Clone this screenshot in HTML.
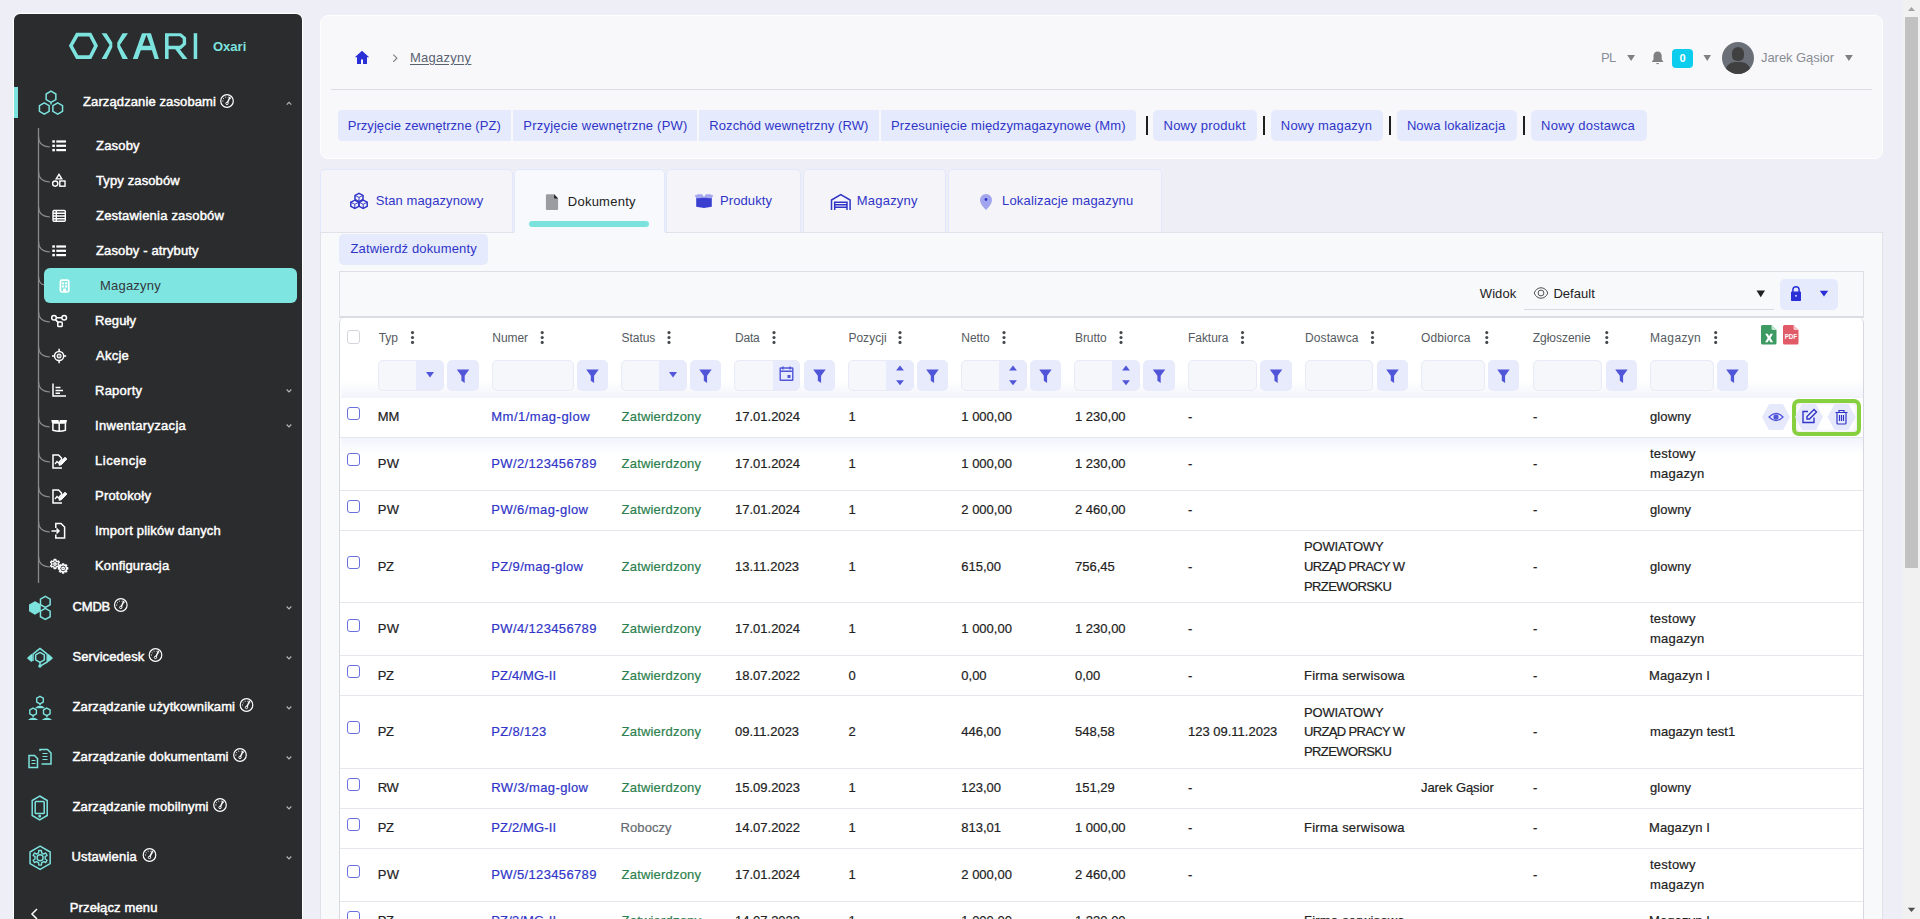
<!DOCTYPE html><html><head><meta charset="utf-8"><title>Magazyny</title><style>
*{box-sizing:border-box;margin:0;padding:0}
html,body{width:1920px;height:919px;overflow:hidden;background:#eeeef7;font-family:"Liberation Sans",sans-serif;}
.a{position:absolute}
.t{position:absolute;white-space:nowrap;line-height:1}
.si{position:absolute;color:#fff;font-weight:400;-webkit-text-stroke:0.45px #fff;white-space:nowrap;line-height:1}
#ov{position:absolute;left:0;top:0;width:1920px;height:919px}
</style></head><body>
<div class="a" style="left:14px;top:14px;width:288px;height:960px;background:#2b2c2e;border-radius:6px;box-shadow:0 0 0 1px #fff"></div>
<div class="a" style="left:44px;top:268px;width:253px;height:35px;background:#7fe5e1;border-radius:6px"></div>
<div class="a" style="left:14px;top:87px;width:4px;height:31px;background:#7de3de"></div>
<div class="t" style="left:213.00px;top:40.00px;font-size:13px;font-weight:700;color:#7de3de">Oxari</div>
<div class="si" style="left:83.00px;top:94.80px;font-size:13px;;letter-spacing:0.111px">Zarządzanie zasobami</div>
<div class="si" style="left:96.00px;top:138.50px;font-size:13px;;letter-spacing:0.194px">Zasoby</div>
<div class="si" style="left:96.00px;top:173.50px;font-size:13px;;letter-spacing:0.120px">Typy zasobów</div>
<div class="si" style="left:96.00px;top:208.50px;font-size:13px;;letter-spacing:0.200px">Zestawienia zasobów</div>
<div class="si" style="left:96.00px;top:243.50px;font-size:13px;;letter-spacing:0.136px">Zasoby - atrybuty</div>
<div class="t" style="left:100.00px;top:279.00px;font-size:13px;color:#33383d;letter-spacing:0.207px">Magazyny</div>
<div class="si" style="left:95.00px;top:313.50px;font-size:13px;;letter-spacing:0.107px">Reguły</div>
<div class="si" style="left:96.00px;top:348.50px;font-size:13px;;letter-spacing:0.260px">Akcje</div>
<div class="si" style="left:95.00px;top:383.50px;font-size:13px;;letter-spacing:0.247px">Raporty</div>
<div class="si" style="left:95.00px;top:418.50px;font-size:13px;;letter-spacing:0.317px">Inwentaryzacja</div>
<div class="si" style="left:95.00px;top:453.50px;font-size:13px;;letter-spacing:0.519px">Licencje</div>
<div class="si" style="left:95.00px;top:488.50px;font-size:13px;;letter-spacing:0.214px">Protokoły</div>
<div class="si" style="left:95.00px;top:523.50px;font-size:13px;;letter-spacing:0.191px">Import plików danych</div>
<div class="si" style="left:95.00px;top:558.50px;font-size:13px;;letter-spacing:0.169px">Konfiguracja</div>
<div class="si" style="left:72.50px;top:600.00px;font-size:13px;;letter-spacing:-0.168px">CMDB</div>
<div class="si" style="left:72.50px;top:650.00px;font-size:13px;;letter-spacing:0.099px">Servicedesk</div>
<div class="si" style="left:72.50px;top:700.00px;font-size:13px;;letter-spacing:0.117px">Zarządzanie użytkownikami</div>
<div class="si" style="left:72.50px;top:750.00px;font-size:13px;;letter-spacing:0.127px">Zarządzanie dokumentami</div>
<div class="si" style="left:72.50px;top:800.00px;font-size:13px;;letter-spacing:0.116px">Zarządzanie mobilnymi</div>
<div class="si" style="left:71.50px;top:850.00px;font-size:13px;;letter-spacing:0.183px">Ustawienia</div>
<div class="si" style="left:69.80px;top:901.00px;font-size:13px;;letter-spacing:0.138px">Przełącz menu</div>
<div class="a" style="left:320px;top:15px;width:1563px;height:144px;background:#f8f8fb;border-radius:8px;border:1px solid #fff"></div>
<div class="a" style="left:331px;top:89px;width:1541px;height:1px;background:#dcdde3"></div>
<div class="t" style="left:410.00px;top:50.80px;font-size:13px;color:#5a6270;text-decoration:underline;text-underline-offset:2px;letter-spacing:0.264px">Magazyny</div>
<div class="t" style="left:1601.00px;top:51.00px;font-size:13px;color:#8a8f99;letter-spacing:-0.671px">PL</div>
<div class="t" style="left:1761.00px;top:51.00px;font-size:13px;color:#888c94;letter-spacing:-0.060px">Jarek Gąsior</div>
<div class="a" style="left:1672px;top:49px;width:21px;height:19px;background:#0dcdef;border-radius:4px;color:#fff;font-size:11px;font-weight:700;text-align:center;line-height:19px">0</div>
<div class="a" style="left:1722px;top:42px;width:32px;height:32px;border-radius:50%;background:#6b7078;overflow:hidden"><div class="a" style="left:10px;top:5px;width:12px;height:14px;border-radius:6px 6px 5px 5px;background:#404040"></div><div class="a" style="left:3px;top:20px;width:26px;height:14px;border-radius:10px 10px 0 0;background:#404040"></div></div>
<div class="a" style="left:338.0px;top:110px;width:173.0px;height:31px;background:#e5eafd;border-radius:4px 0 0 4px"></div>
<div class="t" style="left:347.70px;top:119.40px;font-size:13px;color:#3035c8;letter-spacing:0.059px">Przyjęcie zewnętrzne (PZ)</div>
<div class="a" style="left:513.0px;top:110px;width:184.0px;height:31px;background:#e5eafd;border-radius:0"></div>
<div class="t" style="left:523.30px;top:119.40px;font-size:13px;color:#3035c8;letter-spacing:0.213px">Przyjęcie wewnętrzne (PW)</div>
<div class="a" style="left:699.0px;top:110px;width:180.0px;height:31px;background:#e5eafd;border-radius:0"></div>
<div class="t" style="left:709.30px;top:119.40px;font-size:13px;color:#3035c8;letter-spacing:0.081px">Rozchód wewnętrzny (RW)</div>
<div class="a" style="left:881.0px;top:110px;width:254.5px;height:31px;background:#e5eafd;border-radius:0 4px 4px 0"></div>
<div class="t" style="left:891.00px;top:119.40px;font-size:13px;color:#3035c8;letter-spacing:0.148px">Przesunięcie międzymagazynowe (Mm)</div>
<div class="a" style="left:1153.0px;top:110px;width:104.0px;height:31px;background:#e5eafd;border-radius:5px"></div>
<div class="t" style="left:1163.50px;top:119.40px;font-size:13px;color:#3035c8;letter-spacing:0.239px">Nowy produkt</div>
<div class="a" style="left:1270.8px;top:110px;width:111.8px;height:31px;background:#e5eafd;border-radius:5px"></div>
<div class="t" style="left:1280.80px;top:119.40px;font-size:13px;color:#3035c8;letter-spacing:0.215px">Nowy magazyn</div>
<div class="a" style="left:1396.9px;top:110px;width:120.1px;height:31px;background:#e5eafd;border-radius:5px"></div>
<div class="t" style="left:1406.90px;top:119.40px;font-size:13px;color:#3035c8;letter-spacing:0.094px">Nowa lokalizacja</div>
<div class="a" style="left:1530.8px;top:110px;width:115.9px;height:31px;background:#e5eafd;border-radius:5px"></div>
<div class="t" style="left:1541.10px;top:119.40px;font-size:13px;color:#3035c8;letter-spacing:0.224px">Nowy dostawca</div>
<div class="a" style="left:1146px;top:116px;width:2px;height:19px;background:#1e1e1e"></div>
<div class="a" style="left:1263px;top:116px;width:2px;height:19px;background:#1e1e1e"></div>
<div class="a" style="left:1389px;top:116px;width:2px;height:19px;background:#1e1e1e"></div>
<div class="a" style="left:1523px;top:116px;width:2px;height:19px;background:#1e1e1e"></div>
<div class="a" style="left:320.0px;top:169px;width:192.5px;height:64px;background:#f4f4f9;border-radius:5px 5px 0 0;border:1px solid #e2e8fc;border-bottom:none"></div>
<div class="t" style="left:375.80px;top:193.90px;font-size:13px;color:#3035c8;letter-spacing:0.091px">Stan magazynowy</div>
<div class="a" style="left:513.5px;top:169px;width:151.0px;height:64px;background:#f8f9fc;border-radius:5px 5px 0 0;border:1px solid #e2e8fc;border-bottom:none"></div>
<div class="t" style="left:567.80px;top:194.80px;font-size:13px;color:#222;letter-spacing:0.244px">Dokumenty</div>
<div class="a" style="left:666.0px;top:169px;width:135.0px;height:64px;background:#f4f4f9;border-radius:5px 5px 0 0;border:1px solid #e2e8fc;border-bottom:none"></div>
<div class="t" style="left:720.00px;top:193.90px;font-size:13px;color:#3035c8;letter-spacing:0.100px">Produkty</div>
<div class="a" style="left:803.0px;top:169px;width:143.0px;height:64px;background:#f4f4f9;border-radius:5px 5px 0 0;border:1px solid #e2e8fc;border-bottom:none"></div>
<div class="t" style="left:856.80px;top:193.90px;font-size:13px;color:#3035c8;letter-spacing:0.207px">Magazyny</div>
<div class="a" style="left:948.0px;top:169px;width:214.0px;height:64px;background:#f4f4f9;border-radius:5px 5px 0 0;border:1px solid #e2e8fc;border-bottom:none"></div>
<div class="t" style="left:1002.00px;top:193.90px;font-size:13px;color:#3035c8;letter-spacing:0.175px">Lokalizacje magazynu</div>
<div class="a" style="left:529px;top:221px;width:120px;height:6px;border-radius:3px;background:#7ce3dc"></div>
<div class="a" style="left:320px;top:232px;width:1563px;height:720px;background:#f8f9fb;border:1px solid #e1e2e9"></div>
<div class="a" style="left:513.5px;top:232px;width:151px;height:2px;background:#f8f9fc"></div>
<div class="a" style="left:339px;top:233.5px;width:149px;height:31.5px;background:#e5eafd;border-radius:5px"></div>
<div class="t" style="left:350.50px;top:242.20px;font-size:13px;color:#3035c8;letter-spacing:0.147px">Zatwierdź dokumenty</div>
<div class="a" style="left:339px;top:271px;width:1525px;height:47px;background:#f8f9fb;border:1px solid #dfe0e6;border-bottom:2px solid #dcdde3"></div>
<div class="t" style="left:1479.80px;top:286.80px;font-size:13px;color:#222;letter-spacing:0.070px">Widok</div>
<div class="t" style="left:1553.40px;top:286.80px;font-size:13px;color:#222;letter-spacing:0.037px">Default</div>
<div class="a" style="left:1524px;top:309px;width:250px;height:1px;background:#d9dadf"></div>
<div class="a" style="left:1780px;top:279px;width:58px;height:31px;background:#e5eafd;border-radius:5px"></div>
<div class="a" style="left:339px;top:318px;width:1525px;height:640px;background:#fff;border-left:1px solid #d8d9e0;border-right:1px solid #d8d9e0;border-radius:5px 5px 0 0"></div>
<div class="a" style="left:340.5px;top:380px;width:1522.5px;height:18px;background:linear-gradient(#fff,#f3f4fb)"></div>
<div class="t" style="left:378.70px;top:331.84px;font-size:12px;color:#555a60;letter-spacing:-0.084px">Typ</div>
<div class="t" style="left:492.30px;top:331.84px;font-size:12px;color:#555a60;letter-spacing:-0.077px">Numer</div>
<div class="t" style="left:621.60px;top:331.84px;font-size:12px;color:#555a60;letter-spacing:-0.064px">Status</div>
<div class="t" style="left:735.00px;top:331.84px;font-size:12px;color:#555a60;letter-spacing:-0.225px">Data</div>
<div class="t" style="left:848.40px;top:331.84px;font-size:12px;color:#555a60;letter-spacing:0.026px">Pozycji</div>
<div class="t" style="left:961.30px;top:331.84px;font-size:12px;color:#555a60;letter-spacing:-0.064px">Netto</div>
<div class="t" style="left:1075.00px;top:331.84px;font-size:12px;color:#555a60;letter-spacing:-0.068px">Brutto</div>
<div class="t" style="left:1188.00px;top:331.84px;font-size:12px;color:#555a60;letter-spacing:-0.043px">Faktura</div>
<div class="t" style="left:1305.00px;top:331.84px;font-size:12px;color:#555a60;letter-spacing:0.105px">Dostawca</div>
<div class="t" style="left:1421.00px;top:331.84px;font-size:12px;color:#555a60;letter-spacing:0.112px">Odbiorca</div>
<div class="t" style="left:1532.70px;top:331.84px;font-size:12px;color:#555a60;letter-spacing:-0.017px">Zgłoszenie</div>
<div class="t" style="left:1650.00px;top:331.84px;font-size:12px;color:#555a60;letter-spacing:0.347px">Magazyn</div>
<div class="a" style="left:347px;top:330px;width:13px;height:14px;border:1px solid #d4d5dc;border-radius:3px;background:#fff"></div>
<div class="a" style="left:378px;top:360px;width:66px;height:31px;background:#f6f7fb;border:1px solid #e8ebf7;border-radius:5px;overflow:hidden"><div class="a" style="left:37px;top:0;width:28px;height:29px;background:#e8ebfb"></div></div>
<div class="a" style="left:447px;top:360px;width:32px;height:31px;background:#e8ebfb;border-radius:5px"></div>
<div class="a" style="left:492px;top:360px;width:82px;height:31px;background:#f6f7fb;border:1px solid #e8ebf7;border-radius:5px;overflow:hidden"></div>
<div class="a" style="left:577px;top:360px;width:31px;height:31px;background:#e8ebfb;border-radius:5px"></div>
<div class="a" style="left:621px;top:360px;width:66px;height:31px;background:#f6f7fb;border:1px solid #e8ebf7;border-radius:5px;overflow:hidden"><div class="a" style="left:37px;top:0;width:28px;height:29px;background:#e8ebfb"></div></div>
<div class="a" style="left:690px;top:360px;width:31px;height:31px;background:#e8ebfb;border-radius:5px"></div>
<div class="a" style="left:734px;top:360px;width:66px;height:31px;background:#f6f7fb;border:1px solid #e8ebf7;border-radius:5px;overflow:hidden"><div class="a" style="left:38px;top:0;width:27px;height:29px;background:#e8ebfb"></div></div>
<div class="a" style="left:804px;top:360px;width:31px;height:31px;background:#e8ebfb;border-radius:5px"></div>
<div class="a" style="left:848px;top:360px;width:66px;height:31px;background:#f6f7fb;border:1px solid #e8ebf7;border-radius:5px;overflow:hidden"><div class="a" style="left:37px;top:0;width:28px;height:29px;background:#e8ebfb"></div></div>
<div class="a" style="left:917px;top:360px;width:31px;height:31px;background:#e8ebfb;border-radius:5px"></div>
<div class="a" style="left:961px;top:360px;width:66px;height:31px;background:#f6f7fb;border:1px solid #e8ebf7;border-radius:5px;overflow:hidden"><div class="a" style="left:37px;top:0;width:28px;height:29px;background:#e8ebfb"></div></div>
<div class="a" style="left:1030px;top:360px;width:31px;height:31px;background:#e8ebfb;border-radius:5px"></div>
<div class="a" style="left:1074px;top:360px;width:66px;height:31px;background:#f6f7fb;border:1px solid #e8ebf7;border-radius:5px;overflow:hidden"><div class="a" style="left:37px;top:0;width:28px;height:29px;background:#e8ebfb"></div></div>
<div class="a" style="left:1143px;top:360px;width:32px;height:31px;background:#e8ebfb;border-radius:5px"></div>
<div class="a" style="left:1188px;top:360px;width:69px;height:31px;background:#f6f7fb;border:1px solid #e8ebf7;border-radius:5px;overflow:hidden"></div>
<div class="a" style="left:1260px;top:360px;width:32px;height:31px;background:#e8ebfb;border-radius:5px"></div>
<div class="a" style="left:1305px;top:360px;width:68px;height:31px;background:#f6f7fb;border:1px solid #e8ebf7;border-radius:5px;overflow:hidden"></div>
<div class="a" style="left:1377px;top:360px;width:31px;height:31px;background:#e8ebfb;border-radius:5px"></div>
<div class="a" style="left:1421px;top:360px;width:64px;height:31px;background:#f6f7fb;border:1px solid #e8ebf7;border-radius:5px;overflow:hidden"></div>
<div class="a" style="left:1488px;top:360px;width:31px;height:31px;background:#e8ebfb;border-radius:5px"></div>
<div class="a" style="left:1533px;top:360px;width:69px;height:31px;background:#f6f7fb;border:1px solid #e8ebf7;border-radius:5px;overflow:hidden"></div>
<div class="a" style="left:1606px;top:360px;width:31px;height:31px;background:#e8ebfb;border-radius:5px"></div>
<div class="a" style="left:1650px;top:360px;width:64px;height:31px;background:#f6f7fb;border:1px solid #e8ebf7;border-radius:5px;overflow:hidden"></div>
<div class="a" style="left:1717px;top:360px;width:31px;height:31px;background:#e8ebfb;border-radius:5px"></div>
<div class="a" style="left:340.5px;top:398px;width:1522.5px;height:39px;background:#fff"></div>
<div class="a" style="left:340px;top:437px;width:1523px;height:1px;background:#e6e7ec"></div>
<div class="a" style="left:347px;top:407.2px;width:13px;height:13px;border:1.5px solid #6a6fe0;border-radius:3px;background:#fff"></div>
<div class="t" style="left:377.70px;top:409.60px;font-size:13px;color:#222;-webkit-text-stroke:0.2px #222">MM</div>
<div class="t" style="left:491.30px;top:409.60px;font-size:13px;color:#3035c8;-webkit-text-stroke:0.2px #3035c8;letter-spacing:0.485px">Mm/1/mag-glow</div>
<div class="t" style="left:621.60px;top:409.60px;font-size:13px;color:#2d7f4e;-webkit-text-stroke:0.2px #2d7f4e;letter-spacing:0.190px">Zatwierdzony</div>
<div class="t" style="left:735.00px;top:409.60px;font-size:13px;color:#222;-webkit-text-stroke:0.2px #222">17.01.2024</div>
<div class="t" style="left:848.40px;top:409.60px;font-size:13px;color:#222;-webkit-text-stroke:0.2px #222">1</div>
<div class="t" style="left:961.30px;top:409.60px;font-size:13px;color:#222;-webkit-text-stroke:0.2px #222">1 000,00</div>
<div class="t" style="left:1075.00px;top:409.60px;font-size:13px;color:#222;-webkit-text-stroke:0.2px #222">1 230,00</div>
<div class="t" style="left:1188.00px;top:409.60px;font-size:13px;color:#222;-webkit-text-stroke:0.2px #222">-</div>
<div class="t" style="left:1533.00px;top:409.60px;font-size:13px;color:#222;-webkit-text-stroke:0.2px #222">-</div>
<div class="t" style="left:1650.00px;top:409.60px;font-size:13px;color:#222;-webkit-text-stroke:0.2px #222;letter-spacing:0.127px">glowny</div>
<div class="a" style="left:340.5px;top:438px;width:1522.5px;height:16px;background:linear-gradient(#f2f4fc,#fff)"></div>
<div class="a" style="left:340px;top:490px;width:1523px;height:1px;background:#e6e7ec"></div>
<div class="a" style="left:347px;top:453.3px;width:13px;height:13px;border:1.5px solid #6a6fe0;border-radius:3px;background:#fff"></div>
<div class="t" style="left:377.70px;top:456.75px;font-size:13px;color:#222;-webkit-text-stroke:0.2px #222;letter-spacing:0.329px">PW</div>
<div class="t" style="left:491.30px;top:456.75px;font-size:13px;color:#3035c8;-webkit-text-stroke:0.2px #3035c8;letter-spacing:0.359px">PW/2/123456789</div>
<div class="t" style="left:621.60px;top:456.75px;font-size:13px;color:#2d7f4e;-webkit-text-stroke:0.2px #2d7f4e;letter-spacing:0.190px">Zatwierdzony</div>
<div class="t" style="left:735.00px;top:456.75px;font-size:13px;color:#222;-webkit-text-stroke:0.2px #222">17.01.2024</div>
<div class="t" style="left:848.40px;top:456.75px;font-size:13px;color:#222;-webkit-text-stroke:0.2px #222">1</div>
<div class="t" style="left:961.30px;top:456.75px;font-size:13px;color:#222;-webkit-text-stroke:0.2px #222">1 000,00</div>
<div class="t" style="left:1075.00px;top:456.75px;font-size:13px;color:#222;-webkit-text-stroke:0.2px #222">1 230,00</div>
<div class="t" style="left:1188.00px;top:456.75px;font-size:13px;color:#222;-webkit-text-stroke:0.2px #222">-</div>
<div class="t" style="left:1533.00px;top:456.75px;font-size:13px;color:#222;-webkit-text-stroke:0.2px #222">-</div>
<div class="t" style="left:1650.00px;top:446.85px;font-size:13px;color:#222;-webkit-text-stroke:0.2px #222;letter-spacing:0.238px">testowy</div>
<div class="t" style="left:1650.00px;top:466.65px;font-size:13px;color:#222;-webkit-text-stroke:0.2px #222;letter-spacing:0.230px">magazyn</div>
<div class="a" style="left:340px;top:530px;width:1523px;height:1px;background:#e6e7ec"></div>
<div class="a" style="left:347px;top:500.1px;width:13px;height:13px;border:1.5px solid #6a6fe0;border-radius:3px;background:#fff"></div>
<div class="t" style="left:377.70px;top:502.50px;font-size:13px;color:#222;-webkit-text-stroke:0.2px #222;letter-spacing:0.329px">PW</div>
<div class="t" style="left:491.30px;top:502.50px;font-size:13px;color:#3035c8;-webkit-text-stroke:0.2px #3035c8;letter-spacing:0.412px">PW/6/mag-glow</div>
<div class="t" style="left:621.60px;top:502.50px;font-size:13px;color:#2d7f4e;-webkit-text-stroke:0.2px #2d7f4e;letter-spacing:0.190px">Zatwierdzony</div>
<div class="t" style="left:735.00px;top:502.50px;font-size:13px;color:#222;-webkit-text-stroke:0.2px #222">17.01.2024</div>
<div class="t" style="left:848.40px;top:502.50px;font-size:13px;color:#222;-webkit-text-stroke:0.2px #222">1</div>
<div class="t" style="left:961.30px;top:502.50px;font-size:13px;color:#222;-webkit-text-stroke:0.2px #222">2 000,00</div>
<div class="t" style="left:1075.00px;top:502.50px;font-size:13px;color:#222;-webkit-text-stroke:0.2px #222">2 460,00</div>
<div class="t" style="left:1188.00px;top:502.50px;font-size:13px;color:#222;-webkit-text-stroke:0.2px #222">-</div>
<div class="t" style="left:1533.00px;top:502.50px;font-size:13px;color:#222;-webkit-text-stroke:0.2px #222">-</div>
<div class="t" style="left:1650.00px;top:502.50px;font-size:13px;color:#222;-webkit-text-stroke:0.2px #222;letter-spacing:0.127px">glowny</div>
<div class="a" style="left:340px;top:602px;width:1523px;height:1px;background:#e6e7ec"></div>
<div class="a" style="left:347px;top:556.2px;width:13px;height:13px;border:1.5px solid #6a6fe0;border-radius:3px;background:#fff"></div>
<div class="t" style="left:377.70px;top:559.55px;font-size:13px;color:#222;-webkit-text-stroke:0.2px #222;letter-spacing:-0.471px">PZ</div>
<div class="t" style="left:491.30px;top:559.55px;font-size:13px;color:#3035c8;-webkit-text-stroke:0.2px #3035c8;letter-spacing:0.347px">PZ/9/mag-glow</div>
<div class="t" style="left:621.60px;top:559.55px;font-size:13px;color:#2d7f4e;-webkit-text-stroke:0.2px #2d7f4e;letter-spacing:0.190px">Zatwierdzony</div>
<div class="t" style="left:735.00px;top:559.55px;font-size:13px;color:#222;-webkit-text-stroke:0.2px #222">13.11.2023</div>
<div class="t" style="left:848.40px;top:559.55px;font-size:13px;color:#222;-webkit-text-stroke:0.2px #222">1</div>
<div class="t" style="left:961.30px;top:559.55px;font-size:13px;color:#222;-webkit-text-stroke:0.2px #222">615,00</div>
<div class="t" style="left:1075.00px;top:559.55px;font-size:13px;color:#222;-webkit-text-stroke:0.2px #222">756,45</div>
<div class="t" style="left:1188.00px;top:559.55px;font-size:13px;color:#222;-webkit-text-stroke:0.2px #222">-</div>
<div class="t" style="left:1304.00px;top:540.25px;font-size:13px;color:#222;-webkit-text-stroke:0.2px #222;letter-spacing:-0.195px">POWIATOWY</div>
<div class="t" style="left:1304.00px;top:560.05px;font-size:13px;color:#222;-webkit-text-stroke:0.2px #222;letter-spacing:-0.641px">URZĄD PRACY W</div>
<div class="t" style="left:1304.00px;top:579.85px;font-size:13px;color:#222;-webkit-text-stroke:0.2px #222;letter-spacing:-0.598px">PRZEWORSKU</div>
<div class="t" style="left:1533.00px;top:559.55px;font-size:13px;color:#222;-webkit-text-stroke:0.2px #222">-</div>
<div class="t" style="left:1650.00px;top:559.55px;font-size:13px;color:#222;-webkit-text-stroke:0.2px #222;letter-spacing:0.127px">glowny</div>
<div class="a" style="left:340px;top:655px;width:1523px;height:1px;background:#e6e7ec"></div>
<div class="a" style="left:347px;top:618.5px;width:13px;height:13px;border:1.5px solid #6a6fe0;border-radius:3px;background:#fff"></div>
<div class="t" style="left:377.70px;top:621.90px;font-size:13px;color:#222;-webkit-text-stroke:0.2px #222;letter-spacing:0.329px">PW</div>
<div class="t" style="left:491.30px;top:621.90px;font-size:13px;color:#3035c8;-webkit-text-stroke:0.2px #3035c8;letter-spacing:0.359px">PW/4/123456789</div>
<div class="t" style="left:621.60px;top:621.90px;font-size:13px;color:#2d7f4e;-webkit-text-stroke:0.2px #2d7f4e;letter-spacing:0.190px">Zatwierdzony</div>
<div class="t" style="left:735.00px;top:621.90px;font-size:13px;color:#222;-webkit-text-stroke:0.2px #222">17.01.2024</div>
<div class="t" style="left:848.40px;top:621.90px;font-size:13px;color:#222;-webkit-text-stroke:0.2px #222">1</div>
<div class="t" style="left:961.30px;top:621.90px;font-size:13px;color:#222;-webkit-text-stroke:0.2px #222">1 000,00</div>
<div class="t" style="left:1075.00px;top:621.90px;font-size:13px;color:#222;-webkit-text-stroke:0.2px #222">1 230,00</div>
<div class="t" style="left:1188.00px;top:621.90px;font-size:13px;color:#222;-webkit-text-stroke:0.2px #222">-</div>
<div class="t" style="left:1533.00px;top:621.90px;font-size:13px;color:#222;-webkit-text-stroke:0.2px #222">-</div>
<div class="t" style="left:1650.00px;top:612.00px;font-size:13px;color:#222;-webkit-text-stroke:0.2px #222;letter-spacing:0.238px">testowy</div>
<div class="t" style="left:1650.00px;top:631.80px;font-size:13px;color:#222;-webkit-text-stroke:0.2px #222;letter-spacing:0.230px">magazyn</div>
<div class="a" style="left:340px;top:695px;width:1523px;height:1px;background:#e6e7ec"></div>
<div class="a" style="left:347px;top:664.9px;width:13px;height:13px;border:1.5px solid #6a6fe0;border-radius:3px;background:#fff"></div>
<div class="t" style="left:377.70px;top:669.10px;font-size:13px;color:#222;-webkit-text-stroke:0.2px #222;letter-spacing:-0.471px">PZ</div>
<div class="t" style="left:491.30px;top:669.10px;font-size:13px;color:#3035c8;-webkit-text-stroke:0.2px #3035c8;letter-spacing:0.150px">PZ/4/MG-II</div>
<div class="t" style="left:621.60px;top:669.10px;font-size:13px;color:#2d7f4e;-webkit-text-stroke:0.2px #2d7f4e;letter-spacing:0.190px">Zatwierdzony</div>
<div class="t" style="left:735.00px;top:669.10px;font-size:13px;color:#222;-webkit-text-stroke:0.2px #222">18.07.2022</div>
<div class="t" style="left:848.40px;top:669.10px;font-size:13px;color:#222;-webkit-text-stroke:0.2px #222">0</div>
<div class="t" style="left:961.30px;top:669.10px;font-size:13px;color:#222;-webkit-text-stroke:0.2px #222">0,00</div>
<div class="t" style="left:1075.00px;top:669.10px;font-size:13px;color:#222;-webkit-text-stroke:0.2px #222">0,00</div>
<div class="t" style="left:1188.00px;top:669.10px;font-size:13px;color:#222;-webkit-text-stroke:0.2px #222">-</div>
<div class="t" style="left:1304.00px;top:669.10px;font-size:13px;color:#222;-webkit-text-stroke:0.2px #222;letter-spacing:0.216px">Firma serwisowa</div>
<div class="t" style="left:1533.00px;top:669.10px;font-size:13px;color:#222;-webkit-text-stroke:0.2px #222">-</div>
<div class="t" style="left:1649.00px;top:669.10px;font-size:13px;color:#222;-webkit-text-stroke:0.2px #222;letter-spacing:0.105px">Magazyn I</div>
<div class="a" style="left:340px;top:768px;width:1523px;height:1px;background:#e6e7ec"></div>
<div class="a" style="left:347px;top:721.4px;width:13px;height:13px;border:1.5px solid #6a6fe0;border-radius:3px;background:#fff"></div>
<div class="t" style="left:377.70px;top:724.80px;font-size:13px;color:#222;-webkit-text-stroke:0.2px #222;letter-spacing:-0.471px">PZ</div>
<div class="t" style="left:491.30px;top:724.80px;font-size:13px;color:#3035c8;-webkit-text-stroke:0.2px #3035c8;letter-spacing:0.325px">PZ/8/123</div>
<div class="t" style="left:621.60px;top:724.80px;font-size:13px;color:#2d7f4e;-webkit-text-stroke:0.2px #2d7f4e;letter-spacing:0.190px">Zatwierdzony</div>
<div class="t" style="left:735.00px;top:724.80px;font-size:13px;color:#222;-webkit-text-stroke:0.2px #222">09.11.2023</div>
<div class="t" style="left:848.40px;top:724.80px;font-size:13px;color:#222;-webkit-text-stroke:0.2px #222">2</div>
<div class="t" style="left:961.30px;top:724.80px;font-size:13px;color:#222;-webkit-text-stroke:0.2px #222">446,00</div>
<div class="t" style="left:1075.00px;top:724.80px;font-size:13px;color:#222;-webkit-text-stroke:0.2px #222">548,58</div>
<div class="t" style="left:1188.00px;top:724.80px;font-size:13px;color:#222;-webkit-text-stroke:0.2px #222;letter-spacing:-0.005px">123 09.11.2023</div>
<div class="t" style="left:1304.00px;top:705.50px;font-size:13px;color:#222;-webkit-text-stroke:0.2px #222;letter-spacing:-0.195px">POWIATOWY</div>
<div class="t" style="left:1304.00px;top:725.30px;font-size:13px;color:#222;-webkit-text-stroke:0.2px #222;letter-spacing:-0.641px">URZĄD PRACY W</div>
<div class="t" style="left:1304.00px;top:745.10px;font-size:13px;color:#222;-webkit-text-stroke:0.2px #222;letter-spacing:-0.598px">PRZEWORSKU</div>
<div class="t" style="left:1533.00px;top:724.80px;font-size:13px;color:#222;-webkit-text-stroke:0.2px #222">-</div>
<div class="t" style="left:1650.00px;top:724.80px;font-size:13px;color:#222;-webkit-text-stroke:0.2px #222;letter-spacing:0.049px">magazyn test1</div>
<div class="a" style="left:340px;top:808px;width:1523px;height:1px;background:#e6e7ec"></div>
<div class="a" style="left:347px;top:777.9px;width:13px;height:13px;border:1.5px solid #6a6fe0;border-radius:3px;background:#fff"></div>
<div class="t" style="left:377.70px;top:781.30px;font-size:13px;color:#222;-webkit-text-stroke:0.2px #222;letter-spacing:-0.353px">RW</div>
<div class="t" style="left:491.30px;top:781.30px;font-size:13px;color:#3035c8;-webkit-text-stroke:0.2px #3035c8;letter-spacing:0.371px">RW/3/mag-glow</div>
<div class="t" style="left:621.60px;top:781.30px;font-size:13px;color:#2d7f4e;-webkit-text-stroke:0.2px #2d7f4e;letter-spacing:0.190px">Zatwierdzony</div>
<div class="t" style="left:735.00px;top:781.30px;font-size:13px;color:#222;-webkit-text-stroke:0.2px #222">15.09.2023</div>
<div class="t" style="left:848.40px;top:781.30px;font-size:13px;color:#222;-webkit-text-stroke:0.2px #222">1</div>
<div class="t" style="left:961.30px;top:781.30px;font-size:13px;color:#222;-webkit-text-stroke:0.2px #222">123,00</div>
<div class="t" style="left:1075.00px;top:781.30px;font-size:13px;color:#222;-webkit-text-stroke:0.2px #222">151,29</div>
<div class="t" style="left:1188.00px;top:781.30px;font-size:13px;color:#222;-webkit-text-stroke:0.2px #222">-</div>
<div class="t" style="left:1421.00px;top:781.30px;font-size:13px;color:#222;-webkit-text-stroke:0.2px #222;letter-spacing:-0.078px">Jarek Gąsior</div>
<div class="t" style="left:1533.00px;top:781.30px;font-size:13px;color:#222;-webkit-text-stroke:0.2px #222">-</div>
<div class="t" style="left:1650.00px;top:781.30px;font-size:13px;color:#222;-webkit-text-stroke:0.2px #222;letter-spacing:0.127px">glowny</div>
<div class="a" style="left:340px;top:848px;width:1523px;height:1px;background:#e6e7ec"></div>
<div class="a" style="left:347px;top:818.1px;width:13px;height:13px;border:1.5px solid #6a6fe0;border-radius:3px;background:#fff"></div>
<div class="t" style="left:377.70px;top:820.50px;font-size:13px;color:#222;-webkit-text-stroke:0.2px #222;letter-spacing:-0.471px">PZ</div>
<div class="t" style="left:491.30px;top:820.50px;font-size:13px;color:#3035c8;-webkit-text-stroke:0.2px #3035c8;letter-spacing:0.150px">PZ/2/MG-II</div>
<div class="t" style="left:620.60px;top:820.50px;font-size:13px;color:#666a70;-webkit-text-stroke:0.2px #666a70;letter-spacing:0.070px">Roboczy</div>
<div class="t" style="left:735.00px;top:820.50px;font-size:13px;color:#222;-webkit-text-stroke:0.2px #222">14.07.2022</div>
<div class="t" style="left:848.40px;top:820.50px;font-size:13px;color:#222;-webkit-text-stroke:0.2px #222">1</div>
<div class="t" style="left:961.30px;top:820.50px;font-size:13px;color:#222;-webkit-text-stroke:0.2px #222">813,01</div>
<div class="t" style="left:1075.00px;top:820.50px;font-size:13px;color:#222;-webkit-text-stroke:0.2px #222">1 000,00</div>
<div class="t" style="left:1188.00px;top:820.50px;font-size:13px;color:#222;-webkit-text-stroke:0.2px #222">-</div>
<div class="t" style="left:1304.00px;top:820.50px;font-size:13px;color:#222;-webkit-text-stroke:0.2px #222;letter-spacing:0.216px">Firma serwisowa</div>
<div class="t" style="left:1533.00px;top:820.50px;font-size:13px;color:#222;-webkit-text-stroke:0.2px #222">-</div>
<div class="t" style="left:1649.00px;top:820.50px;font-size:13px;color:#222;-webkit-text-stroke:0.2px #222;letter-spacing:0.105px">Magazyn I</div>
<div class="a" style="left:340px;top:901px;width:1523px;height:1px;background:#e6e7ec"></div>
<div class="a" style="left:347px;top:864.6px;width:13px;height:13px;border:1.5px solid #6a6fe0;border-radius:3px;background:#fff"></div>
<div class="t" style="left:377.70px;top:868.00px;font-size:13px;color:#222;-webkit-text-stroke:0.2px #222;letter-spacing:0.329px">PW</div>
<div class="t" style="left:491.30px;top:868.00px;font-size:13px;color:#3035c8;-webkit-text-stroke:0.2px #3035c8;letter-spacing:0.359px">PW/5/123456789</div>
<div class="t" style="left:621.60px;top:868.00px;font-size:13px;color:#2d7f4e;-webkit-text-stroke:0.2px #2d7f4e;letter-spacing:0.190px">Zatwierdzony</div>
<div class="t" style="left:735.00px;top:868.00px;font-size:13px;color:#222;-webkit-text-stroke:0.2px #222">17.01.2024</div>
<div class="t" style="left:848.40px;top:868.00px;font-size:13px;color:#222;-webkit-text-stroke:0.2px #222">1</div>
<div class="t" style="left:961.30px;top:868.00px;font-size:13px;color:#222;-webkit-text-stroke:0.2px #222">2 000,00</div>
<div class="t" style="left:1075.00px;top:868.00px;font-size:13px;color:#222;-webkit-text-stroke:0.2px #222">2 460,00</div>
<div class="t" style="left:1188.00px;top:868.00px;font-size:13px;color:#222;-webkit-text-stroke:0.2px #222">-</div>
<div class="t" style="left:1533.00px;top:868.00px;font-size:13px;color:#222;-webkit-text-stroke:0.2px #222">-</div>
<div class="t" style="left:1650.00px;top:858.10px;font-size:13px;color:#222;-webkit-text-stroke:0.2px #222;letter-spacing:0.238px">testowy</div>
<div class="t" style="left:1650.00px;top:877.90px;font-size:13px;color:#222;-webkit-text-stroke:0.2px #222;letter-spacing:0.230px">magazyn</div>
<div class="a" style="left:340px;top:941px;width:1523px;height:1px;background:#e6e7ec"></div>
<div class="a" style="left:347px;top:910.9px;width:13px;height:13px;border:1.5px solid #6a6fe0;border-radius:3px;background:#fff"></div>
<div class="t" style="left:377.70px;top:914.30px;font-size:13px;color:#222;-webkit-text-stroke:0.2px #222;letter-spacing:-0.471px">PZ</div>
<div class="t" style="left:491.30px;top:914.30px;font-size:13px;color:#3035c8;-webkit-text-stroke:0.2px #3035c8;letter-spacing:0.150px">PZ/3/MG-II</div>
<div class="t" style="left:621.60px;top:914.30px;font-size:13px;color:#2d7f4e;-webkit-text-stroke:0.2px #2d7f4e;letter-spacing:0.190px">Zatwierdzony</div>
<div class="t" style="left:735.00px;top:914.30px;font-size:13px;color:#222;-webkit-text-stroke:0.2px #222">14.07.2022</div>
<div class="t" style="left:848.40px;top:914.30px;font-size:13px;color:#222;-webkit-text-stroke:0.2px #222">1</div>
<div class="t" style="left:961.30px;top:914.30px;font-size:13px;color:#222;-webkit-text-stroke:0.2px #222">1 000,00</div>
<div class="t" style="left:1075.00px;top:914.30px;font-size:13px;color:#222;-webkit-text-stroke:0.2px #222">1 230,00</div>
<div class="t" style="left:1188.00px;top:914.30px;font-size:13px;color:#222;-webkit-text-stroke:0.2px #222">-</div>
<div class="t" style="left:1304.00px;top:914.30px;font-size:13px;color:#222;-webkit-text-stroke:0.2px #222;letter-spacing:0.216px">Firma serwisowa</div>
<div class="t" style="left:1533.00px;top:914.30px;font-size:13px;color:#222;-webkit-text-stroke:0.2px #222">-</div>
<div class="t" style="left:1649.00px;top:914.30px;font-size:13px;color:#222;-webkit-text-stroke:0.2px #222;letter-spacing:0.105px">Magazyn I</div>
<div class="a" style="left:1792px;top:398.5px;width:68.5px;height:37px;border:4px solid #86cf3e;border-radius:7px;box-shadow:inset 0 0 4px rgba(0,0,0,0.12)"></div>
<div class="a" style="left:1903px;top:0;width:17px;height:919px;background:#f1f1f1"></div>
<div class="a" style="left:1905px;top:17px;width:13px;height:551px;background:#c1c1c1"></div>
<svg id="ov" width="1920" height="919" viewBox="0 0 1920 919"><g fill="#45484d"><circle cx="412.5" cy="332.6" r="1.55"/><circle cx="412.5" cy="337.5" r="1.55"/><circle cx="412.5" cy="342.4" r="1.55"/></g><g fill="#45484d"><circle cx="542.2" cy="332.6" r="1.55"/><circle cx="542.2" cy="337.5" r="1.55"/><circle cx="542.2" cy="342.4" r="1.55"/></g><g fill="#45484d"><circle cx="669.0" cy="332.6" r="1.55"/><circle cx="669.0" cy="337.5" r="1.55"/><circle cx="669.0" cy="342.4" r="1.55"/></g><g fill="#45484d"><circle cx="774.0" cy="332.6" r="1.55"/><circle cx="774.0" cy="337.5" r="1.55"/><circle cx="774.0" cy="342.4" r="1.55"/></g><g fill="#45484d"><circle cx="900.0" cy="332.6" r="1.55"/><circle cx="900.0" cy="337.5" r="1.55"/><circle cx="900.0" cy="342.4" r="1.55"/></g><g fill="#45484d"><circle cx="1004.0" cy="332.6" r="1.55"/><circle cx="1004.0" cy="337.5" r="1.55"/><circle cx="1004.0" cy="342.4" r="1.55"/></g><g fill="#45484d"><circle cx="1121.0" cy="332.6" r="1.55"/><circle cx="1121.0" cy="337.5" r="1.55"/><circle cx="1121.0" cy="342.4" r="1.55"/></g><g fill="#45484d"><circle cx="1242.5" cy="332.6" r="1.55"/><circle cx="1242.5" cy="337.5" r="1.55"/><circle cx="1242.5" cy="342.4" r="1.55"/></g><g fill="#45484d"><circle cx="1372.5" cy="332.6" r="1.55"/><circle cx="1372.5" cy="337.5" r="1.55"/><circle cx="1372.5" cy="342.4" r="1.55"/></g><g fill="#45484d"><circle cx="1486.8" cy="332.6" r="1.55"/><circle cx="1486.8" cy="337.5" r="1.55"/><circle cx="1486.8" cy="342.4" r="1.55"/></g><g fill="#45484d"><circle cx="1606.8" cy="332.6" r="1.55"/><circle cx="1606.8" cy="337.5" r="1.55"/><circle cx="1606.8" cy="342.4" r="1.55"/></g><g fill="#45484d"><circle cx="1715.7" cy="332.6" r="1.55"/><circle cx="1715.7" cy="337.5" r="1.55"/><circle cx="1715.7" cy="342.4" r="1.55"/></g><path d="M456.8 369.5h12.5l-4.6 6.2v7.3l-3.3 -2.2v-5.1z" fill="#5155d8"/><path d="M426.0 372h8l-4 5.5z" fill="#5155d8"/><path d="M586.2 369.5h12.5l-4.6 6.2v7.3l-3.3 -2.2v-5.1z" fill="#5155d8"/><path d="M699.2 369.5h12.5l-4.6 6.2v7.3l-3.3 -2.2v-5.1z" fill="#5155d8"/><path d="M669.0 372h8l-4 5.5z" fill="#5155d8"/><path d="M813.2 369.5h12.5l-4.6 6.2v7.3l-3.3 -2.2v-5.1z" fill="#5155d8"/><g transform="translate(779.5 366)" fill="none" stroke="#5155d8" stroke-width="1.4"><rect x="0.7" y="2" width="12.6" height="12.3" rx="0.5"/><path d="M0.7 5.2h12.6M3.5 0.5v3M10.5 0.5v3"/><rect x="8" y="9" width="3" height="3" fill="#5155d8" stroke="none"/></g><path d="M926.2 369.5h12.5l-4.6 6.2v7.3l-3.3 -2.2v-5.1z" fill="#5155d8"/><path d="M896.1 370.6l3.9 -5 3.9 5z M896.1 380.2l3.9 5 3.9 -5z" fill="#5155d8"/><path d="M1039.2 369.5h12.5l-4.6 6.2v7.3l-3.3 -2.2v-5.1z" fill="#5155d8"/><path d="M1009.1 370.6l3.9 -5 3.9 5z M1009.1 380.2l3.9 5 3.9 -5z" fill="#5155d8"/><path d="M1152.8 369.5h12.5l-4.6 6.2v7.3l-3.3 -2.2v-5.1z" fill="#5155d8"/><path d="M1122.1 370.6l3.9 -5 3.9 5z M1122.1 380.2l3.9 5 3.9 -5z" fill="#5155d8"/><path d="M1269.8 369.5h12.5l-4.6 6.2v7.3l-3.3 -2.2v-5.1z" fill="#5155d8"/><path d="M1386.2 369.5h12.5l-4.6 6.2v7.3l-3.3 -2.2v-5.1z" fill="#5155d8"/><path d="M1497.2 369.5h12.5l-4.6 6.2v7.3l-3.3 -2.2v-5.1z" fill="#5155d8"/><path d="M1615.2 369.5h12.5l-4.6 6.2v7.3l-3.3 -2.2v-5.1z" fill="#5155d8"/><path d="M1726.2 369.5h12.5l-4.6 6.2v7.3l-3.3 -2.2v-5.1z" fill="#5155d8"/><g transform="translate(1761 325)"><path d="M1.5 0h9l5 5v13a1.5 1.5 0 0 1 -1.5 1.5h-12.5a1.5 1.5 0 0 1 -1.5 -1.5v-16.5a1.5 1.5 0 0 1 1.5 -1.5z" fill="#3d9a62"/><path d="M10.5 0l5 5h-3.5a1.5 1.5 0 0 1 -1.5 -1.5z" fill="#c6e6d2"/><path d="M4.2 8.8h2.6l1.3 2.4 1.3 -2.4h2.6l-2.5 4.2 2.6 4.3h-2.6l-1.4 -2.5 -1.4 2.5h-2.6l2.6 -4.3z" fill="#fff"/></g><g transform="translate(1783 325)"><path d="M1.5 0h9l5 5v13a1.5 1.5 0 0 1 -1.5 1.5h-12.5a1.5 1.5 0 0 1 -1.5 -1.5v-16.5a1.5 1.5 0 0 1 1.5 -1.5z" fill="#e15a68"/><path d="M10.5 0l5 5h-3.5a1.5 1.5 0 0 1 -1.5 -1.5z" fill="#f7c6cb"/><text x="7.9" y="14.2" font-family="Liberation Sans" font-weight="700" font-size="6.8" fill="#fff" text-anchor="middle" textLength="12.5" lengthAdjust="spacingAndGlyphs">PDF</text></g><path d="M1762.0 417l7 -13h14l7 13 -7 13h-14z" fill="#e6e9fb"/><path d="M1795.0 417l7 -13h14l7 13 -7 13h-14z" fill="#e6e9fb"/><path d="M1827.5 417l7 -13h14l7 13 -7 13h-14z" fill="#e6e9fb"/><g transform="translate(1776 417)"><path d="M-7 0q7 -7 14 0q-7 7 -14 0z" fill="none" stroke="#5155d8" stroke-width="1.3"/><circle r="2.6" fill="#5155d8"/></g><g transform="translate(1809 417)" fill="none" stroke="#3035c8" stroke-width="1.4"><path d="M-1 -5.5h-5v11h11v-5"/><path d="M5 -7.5l2.5 2.5 -7 7h-2.5v-2.5z"/></g><g transform="translate(1841.5 417)" fill="none" stroke="#3035c8" stroke-width="1.2"><path d="M-6 -4.5h12M-2.5 -4.5v-2h5v2M-4.5 -4.5v10.5q0 1 1 1h7q1 0 1 -1v-10.5M-2 -2v6M0 -2v6M2 -2v6"/></g><path fill-rule="evenodd" fill="#7de3de" d="M68.9 45.85L76.1 32.8H91.25L98 45.85L91.25 58.9H76.1z M72.9 45.85L78.2 36.4H89.2L94 45.85L89.2 55.3H78.2z"/><g fill="#7de3de" fill-rule="evenodd"><path d="M101.6 33.2H106.5L112.3 42.6V47.2L106.5 59H101.6L109.6 45z"/><path d="M128 33.2H122.5L117.3 42.6V47.2L122.5 59H128L119.9 45z"/><path d="M132.8 59L142 33.2H150.9L158.9 59H154.6L151.9 50.3H140.8L137.7 59z M142.4 45.8L146.5 34.8L150.5 45.8z"/><path d="M165 33.2H181L186.1 37.5V44.6L181 49.2H179.8L187.5 59H182.7L175.2 49.2H168.6V59H165z M168.6 36.3H179.8L182.7 38.8V43.3L179.8 45.8H168.6z"/><rect x="193.7" y="33.2" width="3.5" height="25.8"/></g><g fill="none" stroke="#7de3de" stroke-width="1.5"><path d="M51.00 91.20 L55.85 94.00 L55.85 99.60 L51.00 102.40 L46.15 99.60 L46.15 94.00z M44.30 102.90 L49.15 105.70 L49.15 111.30 L44.30 114.10 L39.45 111.30 L39.45 105.70z M57.70 102.90 L62.55 105.70 L62.55 111.30 L57.70 114.10 L52.85 111.30 L52.85 105.70z M51 102.5v2"/></g><g transform="translate(227.0 101.0)" fill="none" stroke="#fff" stroke-width="1.2"><circle r="6.3"/><path d="M-4.60 0.00L-3.60 0.00M-3.77 -2.64L-2.95 -2.06M-1.57 -4.32L-1.23 -3.38M1.57 -4.32L1.23 -3.38M3.77 -2.64L2.95 -2.06" stroke-width="1"/><path d="M0.6 1.4L2.9 -3.6" stroke-width="1.4" stroke-linecap="round"/><circle cx="0" cy="2.4" r="1.2" stroke-width="1"/></g><g transform="translate(120.8 605.0)" fill="none" stroke="#fff" stroke-width="1.2"><circle r="6.3"/><path d="M-4.60 0.00L-3.60 0.00M-3.77 -2.64L-2.95 -2.06M-1.57 -4.32L-1.23 -3.38M1.57 -4.32L1.23 -3.38M3.77 -2.64L2.95 -2.06" stroke-width="1"/><path d="M0.6 1.4L2.9 -3.6" stroke-width="1.4" stroke-linecap="round"/><circle cx="0" cy="2.4" r="1.2" stroke-width="1"/></g><g transform="translate(155.5 655.0)" fill="none" stroke="#fff" stroke-width="1.2"><circle r="6.3"/><path d="M-4.60 0.00L-3.60 0.00M-3.77 -2.64L-2.95 -2.06M-1.57 -4.32L-1.23 -3.38M1.57 -4.32L1.23 -3.38M3.77 -2.64L2.95 -2.06" stroke-width="1"/><path d="M0.6 1.4L2.9 -3.6" stroke-width="1.4" stroke-linecap="round"/><circle cx="0" cy="2.4" r="1.2" stroke-width="1"/></g><g transform="translate(246.5 705.0)" fill="none" stroke="#fff" stroke-width="1.2"><circle r="6.3"/><path d="M-4.60 0.00L-3.60 0.00M-3.77 -2.64L-2.95 -2.06M-1.57 -4.32L-1.23 -3.38M1.57 -4.32L1.23 -3.38M3.77 -2.64L2.95 -2.06" stroke-width="1"/><path d="M0.6 1.4L2.9 -3.6" stroke-width="1.4" stroke-linecap="round"/><circle cx="0" cy="2.4" r="1.2" stroke-width="1"/></g><g transform="translate(240.0 755.0)" fill="none" stroke="#fff" stroke-width="1.2"><circle r="6.3"/><path d="M-4.60 0.00L-3.60 0.00M-3.77 -2.64L-2.95 -2.06M-1.57 -4.32L-1.23 -3.38M1.57 -4.32L1.23 -3.38M3.77 -2.64L2.95 -2.06" stroke-width="1"/><path d="M0.6 1.4L2.9 -3.6" stroke-width="1.4" stroke-linecap="round"/><circle cx="0" cy="2.4" r="1.2" stroke-width="1"/></g><g transform="translate(220.0 805.0)" fill="none" stroke="#fff" stroke-width="1.2"><circle r="6.3"/><path d="M-4.60 0.00L-3.60 0.00M-3.77 -2.64L-2.95 -2.06M-1.57 -4.32L-1.23 -3.38M1.57 -4.32L1.23 -3.38M3.77 -2.64L2.95 -2.06" stroke-width="1"/><path d="M0.6 1.4L2.9 -3.6" stroke-width="1.4" stroke-linecap="round"/><circle cx="0" cy="2.4" r="1.2" stroke-width="1"/></g><g transform="translate(149.5 855.0)" fill="none" stroke="#fff" stroke-width="1.2"><circle r="6.3"/><path d="M-4.60 0.00L-3.60 0.00M-3.77 -2.64L-2.95 -2.06M-1.57 -4.32L-1.23 -3.38M1.57 -4.32L1.23 -3.38M3.77 -2.64L2.95 -2.06" stroke-width="1"/><path d="M0.6 1.4L2.9 -3.6" stroke-width="1.4" stroke-linecap="round"/><circle cx="0" cy="2.4" r="1.2" stroke-width="1"/></g><path d="M286.7 104.6l2.3 -2.3 2.3 2.3" fill="none" stroke="#b5b5b5" stroke-width="1.2"/><path d="M286.7 389.5l2.3 2.3 2.3 -2.3" fill="none" stroke="#b5b5b5" stroke-width="1.2"/><path d="M286.7 424.5l2.3 2.3 2.3 -2.3" fill="none" stroke="#b5b5b5" stroke-width="1.2"/><path d="M286.7 606.5l2.3 2.3 2.3 -2.3" fill="none" stroke="#b5b5b5" stroke-width="1.2"/><path d="M286.7 656.5l2.3 2.3 2.3 -2.3" fill="none" stroke="#b5b5b5" stroke-width="1.2"/><path d="M286.7 706.5l2.3 2.3 2.3 -2.3" fill="none" stroke="#b5b5b5" stroke-width="1.2"/><path d="M286.7 756.5l2.3 2.3 2.3 -2.3" fill="none" stroke="#b5b5b5" stroke-width="1.2"/><path d="M286.7 806.5l2.3 2.3 2.3 -2.3" fill="none" stroke="#b5b5b5" stroke-width="1.2"/><path d="M286.7 856.5l2.3 2.3 2.3 -2.3" fill="none" stroke="#b5b5b5" stroke-width="1.2"/><path d="M38.5 128V583" stroke="#8a8a8a" stroke-width="1.3" fill="none"/><path d="M38.5 136.5q0 10 11.5 10.5" stroke="#8a8a8a" stroke-width="1.2" fill="none"/><path d="M38.5 171.5q0 10 11.5 10.5" stroke="#8a8a8a" stroke-width="1.2" fill="none"/><path d="M38.5 206.5q0 10 11.5 10.5" stroke="#8a8a8a" stroke-width="1.2" fill="none"/><path d="M38.5 241.5q0 10 11.5 10.5" stroke="#8a8a8a" stroke-width="1.2" fill="none"/><path d="M38.5 276.5q0 7 5.5 8.5" stroke="#8a8a8a" stroke-width="1.2" fill="none"/><path d="M38.5 311.5q0 10 11.5 10.5" stroke="#8a8a8a" stroke-width="1.2" fill="none"/><path d="M38.5 346.5q0 10 11.5 10.5" stroke="#8a8a8a" stroke-width="1.2" fill="none"/><path d="M38.5 381.5q0 10 11.5 10.5" stroke="#8a8a8a" stroke-width="1.2" fill="none"/><path d="M38.5 416.5q0 10 11.5 10.5" stroke="#8a8a8a" stroke-width="1.2" fill="none"/><path d="M38.5 451.5q0 10 11.5 10.5" stroke="#8a8a8a" stroke-width="1.2" fill="none"/><path d="M38.5 486.5q0 10 11.5 10.5" stroke="#8a8a8a" stroke-width="1.2" fill="none"/><path d="M38.5 521.5q0 10 11.5 10.5" stroke="#8a8a8a" stroke-width="1.2" fill="none"/><path d="M38.5 556.5q0 10 11.5 10.5" stroke="#8a8a8a" stroke-width="1.2" fill="none"/><g fill="#fff"><rect x="52.3" y="140.3" width="2.6" height="2.4"/><rect x="52.3" y="144.6" width="2.6" height="2.4"/><rect x="52.3" y="148.9" width="2.6" height="2.4"/><rect x="56.3" y="140.4" width="9.7" height="2.2"/><rect x="56.3" y="144.7" width="9.7" height="2.2"/><rect x="56.3" y="149.0" width="9.7" height="2.2"/></g><g fill="none" stroke="#fff" stroke-width="1.4"><path d="M59 174.3l2.8 4.6h-5.6z"/><circle cx="55.2" cy="183.6" r="2.6"/><rect x="59.8" y="181.0" width="5.2" height="5.2"/></g><g fill="none" stroke="#fff" stroke-width="1.4"><rect x="53" y="210.5" width="12.3" height="10.8" rx="1"/><path d="M53 213.3h12.3M53 216.0h12.3M53 218.7h12.3M56.3 210.5v10.8"/></g><g fill="#fff"><rect x="52.3" y="245.3" width="2.6" height="2.4"/><rect x="52.3" y="249.6" width="2.6" height="2.4"/><rect x="52.3" y="253.9" width="2.6" height="2.4"/><rect x="56.3" y="245.4" width="9.7" height="2.2"/><rect x="56.3" y="249.7" width="9.7" height="2.2"/><rect x="56.3" y="254.0" width="9.7" height="2.2"/></g><g><rect x="60.4" y="280.2" width="8.4" height="11.8" rx="1.6" fill="none" stroke="#fff" stroke-width="1.7"/><g fill="#fff"><rect x="62" y="282.3" width="2.1" height="2.1"/><rect x="65.1" y="282.3" width="2.1" height="2.1"/><rect x="62" y="285.4" width="2.1" height="2.1"/><rect x="65.1" y="285.4" width="2.1" height="2.1"/><path d="M63 292v-2.2a1.6 1.6 0 0 1 3.2 0v2.2z"/></g></g><g fill="none" stroke="#fff" stroke-width="1.5"><circle cx="54" cy="317.8" r="2.3"/><circle cx="64.2" cy="317.8" r="2.3"/><rect x="57.8" y="322.1" width="4.4" height="4.4" rx="0.8"/><path d="M56.3 317.8h5.6M55.4 319.6l3 3"/></g><g fill="none" stroke="#fff" stroke-width="1.5"><circle cx="59.1" cy="356.0" r="4.6"/><circle cx="59.1" cy="356.0" r="1.9" stroke-width="1.2"/><circle cx="59.1" cy="356.0" r="0.7" fill="#fff" stroke="none"/><path d="M59.1 348.8v2.3M59.1 360.9v2.3M52 356.0h2.3M63.9 356.0h2.3"/></g><g fill="none" stroke="#fff" stroke-width="1.5"><path d="M53 383.5v12.5h13"/><path d="M55.5 387.5h5M55.5 390.5h7.5M55.5 393.3h4.5" stroke-width="1.6"/></g><g fill="#fff"><path d="M51.3 420h7.2l0.8 3.8h-7.2z M67 420h-7.2l-0.8 3.8h7.2z"/></g><g fill="none" stroke="#fff" stroke-width="1.5"><path d="M52.9 423.5v6.8q6.3 2 12.5 0v-6.8M59.2 422.5v9"/></g><g fill="none" stroke="#fff" stroke-width="1.5"><path d="M61.5 460.5v-2.5l-3 -3h-5.5v13h9"/><path d="M55 464.0l2 -2.5 1.5 1.5 2.5 -3" stroke-width="1.3"/><path d="M59.5 463.0l5.5 -5.8 1.8 1.8 -5.5 5.8 -2.3 0.5z" fill="#fff" stroke-width="1"/></g><g fill="none" stroke="#fff" stroke-width="1.5"><path d="M61.5 495.5v-2.5l-3 -3h-5.5v13h9"/><path d="M55 499.0l2 -2.5 1.5 1.5 2.5 -3" stroke-width="1.3"/><path d="M59.5 498.0l5.5 -5.8 1.8 1.8 -5.5 5.8 -2.3 0.5z" fill="#fff" stroke-width="1"/></g><g fill="none" stroke="#fff" stroke-width="1.5"><path d="M55.8 528.0v-4.6h5.2l3.6 3.6v11h-8.8v-3.5"/><path d="M51.5 531.0h7.5M56.5 528.5l2.5 2.5 -2.5 2.5"/></g><g fill="none" stroke="#fff" stroke-width="1.4" stroke-linejoin="round"><path d="M54.06 560.84 L54.16 559.48 L55.84 559.48 L55.94 560.84 L57.27 561.61 L58.50 561.01 L59.34 562.46 L58.21 563.23 L58.21 564.77 L59.34 565.54 L58.50 566.99 L57.27 566.39 L55.94 567.16 L55.84 568.52 L54.16 568.52 L54.06 567.16 L52.73 566.39 L51.50 566.99 L50.66 565.54 L51.79 564.77 L51.79 563.23 L50.66 562.46 L51.50 561.01 L52.73 561.61z"/><circle cx="55" cy="564" r="1.2"/><path d="M62.39 565.18 L62.47 563.84 L63.73 563.84 L63.81 565.18 L64.88 565.62 L65.88 564.73 L66.77 565.62 L65.88 566.62 L66.32 567.69 L67.66 567.77 L67.66 569.03 L66.32 569.11 L65.88 570.18 L66.77 571.18 L65.88 572.07 L64.88 571.18 L63.81 571.62 L63.73 572.96 L62.47 572.96 L62.39 571.62 L61.32 571.18 L60.32 572.07 L59.43 571.18 L60.32 570.18 L59.88 569.11 L58.54 569.03 L58.54 567.77 L59.88 567.69 L60.32 566.62 L59.43 565.62 L60.32 564.73 L61.32 565.62z"/><circle cx="63.1" cy="568.4" r="1.2"/></g><g fill="none" stroke="#7de3de" stroke-width="1.5"><path d="M34.90 602.00 L40.01 604.95 L40.01 610.85 L34.90 613.80 L29.79 610.85 L29.79 604.95z" fill="#7de3de"/><path d="M45.30 596.30 L50.15 599.10 L50.15 604.70 L45.30 607.50 L40.45 604.70 L40.45 599.10z M45.30 608.30 L50.15 611.10 L50.15 616.70 L45.30 619.50 L40.45 616.70 L40.45 611.10z"/></g><g fill="none" stroke="#7de3de" stroke-width="1.5" stroke-linejoin="round"><path d="M33 661V654.2L40 648.4 47.2 654.2V662L40.4 665.8"/><path d="M40.00 652.30 L44.33 654.80 L44.33 659.80 L40.00 662.30 L35.67 659.80 L35.67 654.80z"/><path d="M40 662.3v3"/><path d="M28 658.1l3.6 -3.2v6.2z M52 658.1l-3.6 -3.2v6.2z" fill="#7de3de"/><circle cx="39.9" cy="666.1" r="1.7" fill="#7de3de" stroke="none"/></g><g fill="none" stroke="#7de3de" stroke-width="1.4"><path d="M40.00 696.30 L43.29 698.20 L43.29 702.00 L40.00 703.90 L36.71 702.00 L36.71 698.20z M33.10 708.10 L36.39 710.00 L36.39 713.80 L33.10 715.70 L29.81 713.80 L29.81 710.00z M46.80 708.10 L50.09 710.00 L50.09 713.80 L46.80 715.70 L43.51 713.80 L43.51 710.00z"/><path d="M40 703.8v1.2M33.1 715.7v1.2M46.8 715.7v1.2"/></g><g fill="#7de3de"><path d="M34.7 708.2q5.3 -5.2 10.6 0z M27.9 720.1q5.2 -5.2 10.4 0z M41.8 720.1q5.2 -5.2 10.4 0z"/></g><g fill="none" stroke="#7de3de" stroke-width="1.5"><path d="M29 755.5h5.5l3 3v9h-8.5z M40 751v-1.5h7.5l3.5 3.5v11h-9.5"/><path d="M31.5 760.5h4M31.5 763.5h4M42.5 753.5h5M42.5 756.5h5M42.5 759.5h5" stroke-width="1.2"/></g><g fill="none" stroke="#7de3de" stroke-width="1.5"><path d="M39.7 796l7.5 4.5v15l-7.5 4.5 -7.5 -4.5v-15z"/><rect x="35.2" y="801.5" width="9" height="12" rx="0.8"/><circle cx="39.7" cy="816.3" r="0.7" fill="#7de3de"/></g><g fill="none" stroke="#7de3de" stroke-width="1.5" stroke-linejoin="round"><path d="M40.10 846.20 L50.15 852.00 L50.15 863.60 L40.10 869.40 L30.05 863.60 L30.05 852.00z"/><path d="M38.62 852.81 L38.75 850.52 L41.45 850.52 L41.58 852.81 L43.68 854.03 L45.73 852.99 L47.08 855.33 L45.16 856.59 L45.16 859.01 L47.08 860.27 L45.73 862.61 L43.68 861.57 L41.58 862.79 L41.45 865.08 L38.75 865.08 L38.62 862.79 L36.52 861.57 L34.47 862.61 L33.12 860.27 L35.04 859.01 L35.04 856.59 L33.12 855.33 L34.47 852.99 L36.52 854.03z" stroke-width="1.4"/><circle cx="40.1" cy="857.8" r="3" stroke-width="1.4"/></g><path d="M37 909l-5 5 5 5" fill="none" stroke="#fff" stroke-width="1.5"/><path d="M362 50.8l-7.2 6.5h2.2v6.6h4v-4.5h2v4.5h4v-6.6h2.2z" fill="#2a2fd6"/><path d="M393.3 54.6l3.6 3.6 -3.6 3.6" fill="none" stroke="#808080" stroke-width="1.2"/><path d="M1627.2 55h7.8l-3.9 6z M1703.5 55h7.5l-3.75 6z M1845 55h7.8l-3.9 6z" fill="#808080"/><path d="M1657.6 51.5c-2.6 0 -4.1 2 -4.1 4.5v3.6l-1.5 1.8v0.7h11.2v-0.7l-1.5 -1.8v-3.6c0 -2.5 -1.5 -4.5 -4.1 -4.5z M1656.2 62.9a1.4 1.4 0 0 0 2.8 0z" fill="#808080"/><g transform="translate(350 192.6) scale(1 0.93)" fill="none" stroke="#3035c8" stroke-width="1.5"><path d="M9 0.8l4 2.2v4.4l-4 2.2 -4 -2.2v-4.4z M4.8 8.2l4 2.2v4.4l-4 2.2 -4 -2.2v-4.4z M13.2 8.2l4 2.2v4.4l-4 2.2 -4 -2.2v-4.4z"/><path d="M5 3l4 2.2 4 -2.2M0.8 10.4l4 2.2 4 -2.2M9.2 10.4l4 2.2 4 -2.2M9 5.2v4.4M4.8 12.6v4.4M13.2 12.6v4.4" stroke-width="1"/></g><g transform="translate(545.6 194.2)"><path d="M1.5 0h7l4 4.2v10.4a1.2 1.2 0 0 1 -1.2 1.2h-9.8a1.2 1.2 0 0 1 -1.2 -1.2v-13.4a1.2 1.2 0 0 1 1.2 -1.2z" fill="#9b9ba2"/><path d="M8.5 0l4 4.2h-4z" fill="#222"/></g><g transform="translate(694.7 194.2)"><path d="M1.5 3.2h15.6v9.3l-7.8 1.3 -7.8 -1.3z" fill="#3a3fd0"/><path d="M0 1.2l3.5 -1.2h4l1.8 3l1.8 -3h4l3.5 1.2 -1.5 2.8h-3.5l-4.3 -1.5 -4.3 1.5h-3.5z" fill="#a3a7f0"/><path d="M1.5 5.5l3.5 0.5 4.3 -2.5 4.3 2.5 3.5 -0.5" fill="#3a3fd0"/></g><g transform="translate(830.7 193.5)" fill="none" stroke="#3035c8" stroke-width="1.5"><path d="M0.8 16.5v-10l9.3 -5.5 9.3 5.5v10"/><path d="M4 16.5v-7.8h12.3v7.8M4 11.2h12.3M4 13.8h12.3"/></g><g transform="translate(980 194)"><path d="M6 0a6 6 0 0 1 6 6c0 4.5 -6 10 -6 10s-6 -5.5 -6 -10a6 6 0 0 1 6 -6z" fill="#a0a5ee"/><circle cx="6" cy="5.5" r="1.4" fill="#3035c8"/></g><g transform="translate(1541 293)" fill="none" stroke="#333" stroke-width="0.85"><path d="M-6.8 0C-4.2 -7 4.2 -7 6.8 0C4.2 7 -4.2 7 -6.8 0z"/><circle r="2.9"/></g><path d="M1756.5 290.6h8.5l-4.25 6.6z" fill="#222"/><g fill="#2a2fd6"><path d="M1792.9 292v-2.2a3.1 3.1 0 0 1 6.2 0v2.2" fill="none" stroke="#2a2fd6" stroke-width="1.5"/><rect x="1791" y="291.5" width="10" height="9.5" rx="0.8"/></g><rect x="1795.2" y="295" width="1.6" height="1.6" fill="#e5eafd"/><path d="M1819.8 290.8h8.4l-4.2 5.8z" fill="#2a2fd6"/><path d="M1908 11h7l-3.5 -4z" fill="#a3a3a3"/><path d="M1907.8 907.8h7.4l-3.7 4.2z" fill="#505050"/></svg>
</body></html>
